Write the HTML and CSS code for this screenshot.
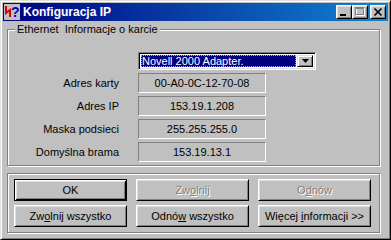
FILE: index.html
```html
<!DOCTYPE html>
<html lang="pl">

<head>
    <meta charset="UTF-8">
    <title>Konfiguracja IP</title>
    <link rel="stylesheet" href="styles.css">
</head>

<body>
    <div class="window">
        <div class="titlebar">
            <svg class="app-icon" width="16" height="16" viewBox="0 0 16 16">
                <rect x="0" y="0" width="16" height="16" fill="#c0c0c0" />
                <polyline points="2,2 2,9 6,6 6,13" fill="none" stroke="#e00000" stroke-width="2" />
                <text x="7" y="13" font-family="Liberation Sans, Arial, sans-serif" font-size="14" font-weight="bold" fill="#0000c8">?</text>
            </svg>
            <span class="title">Konfiguracja IP</span>
            <div class="controls">
                <span class="ctl"><svg width="14" height="12" viewBox="0 0 14 12"><rect x="3" y="8" width="6" height="2" fill="#000" /></svg></span>
                <span class="ctl"><svg width="14" height="12" viewBox="0 0 14 12"><rect x="3.5" y="2.5" width="8" height="7" fill="none" stroke="#fff" /><rect x="2.5" y="1.5" width="8" height="7" fill="none" stroke="#808080" /><rect x="2" y="1" width="9" height="2" fill="#808080" /></svg></span>
                <span class="ctl close"><svg width="14" height="12" viewBox="0 0 14 12"><path d="M3.5 2.5 L10.5 9.5 M10.5 2.5 L3.5 9.5" stroke="#000" stroke-width="1.6" /></svg></span>
            </div>
        </div>

        <div class="content">
            <fieldset class="group">
                <legend>Ethernet&nbsp; Informacje o karcie</legend>
                <div class="info">
                    <div class="combo">
                        <span class="combo-text"><span class="sel">Novell 2000 Adapter.</span></span>
                        <span class="combo-btn"><svg width="7" height="4" viewBox="0 0 7 4"><path d="M0 0 H7 L3.5 4 Z" fill="#000" /></svg></span>
                    </div>

                    <span class="lbl">Adres karty</span>
                    <span class="val">00-A0-0C-12-70-08</span>

                    <span class="lbl">Adres IP</span>
                    <span class="val">153.19.1.208</span>

                    <span class="lbl">Maska podsieci</span>
                    <span class="val">255.255.255.0</span>

                    <span class="lbl">Domyślna brama</span>
                    <span class="val">153.19.13.1</span>
                </div>
            </fieldset>

            <div class="group actions">
                <button class="btn default">OK</button>
                <button class="btn" disabled>Zw<u>o</u>lnij</button>
                <button class="btn" disabled>O<u>d</u>nów</button>
                <button class="btn">Zw<u>o</u>lnij wszystko</button>
                <button class="btn">Odnó<u>w</u> wszystko</button>
                <button class="btn">Więcej <u>i</u>nformacji &gt;&gt;</button>
            </div>
        </div>
    </div>
</body>

</html>
```

FILE: styles.css
```css
body {
    margin: 0;
    font-family: 'Liberation Sans', Arial, sans-serif;
    font-size: 11px;
    color: #000;
    background-color: #c0c0c0;
}

/* Window frame */
.window {
    box-sizing: border-box;
    width: 391px;
    height: 240px;
    padding: 2px;
    background-color: #c0c0c0;
    border: 1px solid;
    border-color: #dfdfdf #000 #000 #dfdfdf;
    box-shadow: inset 1px 1px #fff, inset -1px -1px #808080;
    display: flex;
    flex-direction: column;
}

.titlebar {
    height: 18px;
    display: flex;
    align-items: center;
    padding: 0 2px 0 1px;
    background: linear-gradient(90deg, #000080, #1084d0);
    color: #fff;
}

.app-icon {
    flex: none;
}

.title {
    margin-left: 3px;
    font-size: 12px;
    font-weight: bold;
    flex: 1;
}

.controls {
    display: flex;
    align-items: center;
}

.ctl {
    box-sizing: border-box;
    width: 16px;
    height: 14px;
    display: flex;
    align-items: center;
    justify-content: center;
    background-color: #c0c0c0;
    border: 1px solid;
    border-color: #fff #000 #000 #fff;
    box-shadow: inset 1px 1px #dfdfdf, inset -1px -1px #808080;
}

.ctl.close {
    margin-left: 2px;
}

.content {
    flex: 1;
    padding: 2px 8px 0 4px;
}

/* Etched group boxes */
.group {
    margin: 0;
    border: 1px solid #808080;
    box-shadow: inset 1px 1px #fff, 1px 1px #fff;
}

fieldset.group {
    padding: 16px 0 3px 0;
    min-width: 0;
}

fieldset.group legend {
    margin-left: 7px;
    padding: 0 2px;
    line-height: 13px;
    background-color: #c0c0c0;
}

.info {
    display: grid;
    grid-template-columns: 111px 128px 1fr;
    column-gap: 19px;
    row-gap: 3px;
}

.lbl {
    grid-column: 1;
    text-align: right;
    line-height: 20px;
}

.val {
    grid-column: 2;
    box-sizing: border-box;
    height: 20px;
    line-height: 18px;
    text-align: center;
    border: 1px solid;
    border-color: #808080 #fff #fff #808080;
}

/* Combo box */
.combo {
    grid-column: 2 / 4;
    box-sizing: border-box;
    width: 178px;
    height: 18px;
    display: flex;
    padding: 2px;
    background-color: #fff;
    border: 1px solid;
    border-color: #808080 #fff #fff #808080;
    box-shadow: inset 1px 1px #000, inset -1px -1px #dfdfdf;
}

.combo-text {
    flex: 1;
    display: flex;
    padding-right: 1px;
}

.sel {
    flex: 1;
    box-sizing: border-box;
    line-height: 10px;
    padding: 1px 1px;
    background-color: #000080;
    color: #fff;
    outline: 1px dotted #c0c000;
    outline-offset: -1px;
}

.combo-btn {
    box-sizing: border-box;
    width: 16px;
    display: flex;
    align-items: center;
    justify-content: center;
    background-color: #c0c0c0;
    border: 1px solid;
    border-color: #dfdfdf #000 #000 #dfdfdf;
    box-shadow: inset 1px 1px #fff, inset -1px -1px #808080;
}

/* Buttons */
.actions {
    margin-top: 7px;
    padding: 5px 6px 5px 6px;
    display: grid;
    grid-template-columns: 113px 113px 113px;
    column-gap: 9px;
    row-gap: 4px;
}

.btn {
    box-sizing: border-box;
    height: 22px;
    padding: 0;
    font-family: inherit;
    font-size: 11px;
    color: #000;
    background-color: #c0c0c0;
    border: 1px solid;
    border-color: #fff #000 #000 #fff;
    box-shadow: inset 1px 1px #dfdfdf, inset -1px -1px #808080;
}

.btn.default {
    border-color: #000;
    box-shadow: inset 1px 1px #fff, inset -1px -1px #000, inset 2px 2px #dfdfdf, inset -2px -2px #808080;
}

.btn:disabled {
    color: #808080;
    text-shadow: 1px 1px #fff;
}
```
